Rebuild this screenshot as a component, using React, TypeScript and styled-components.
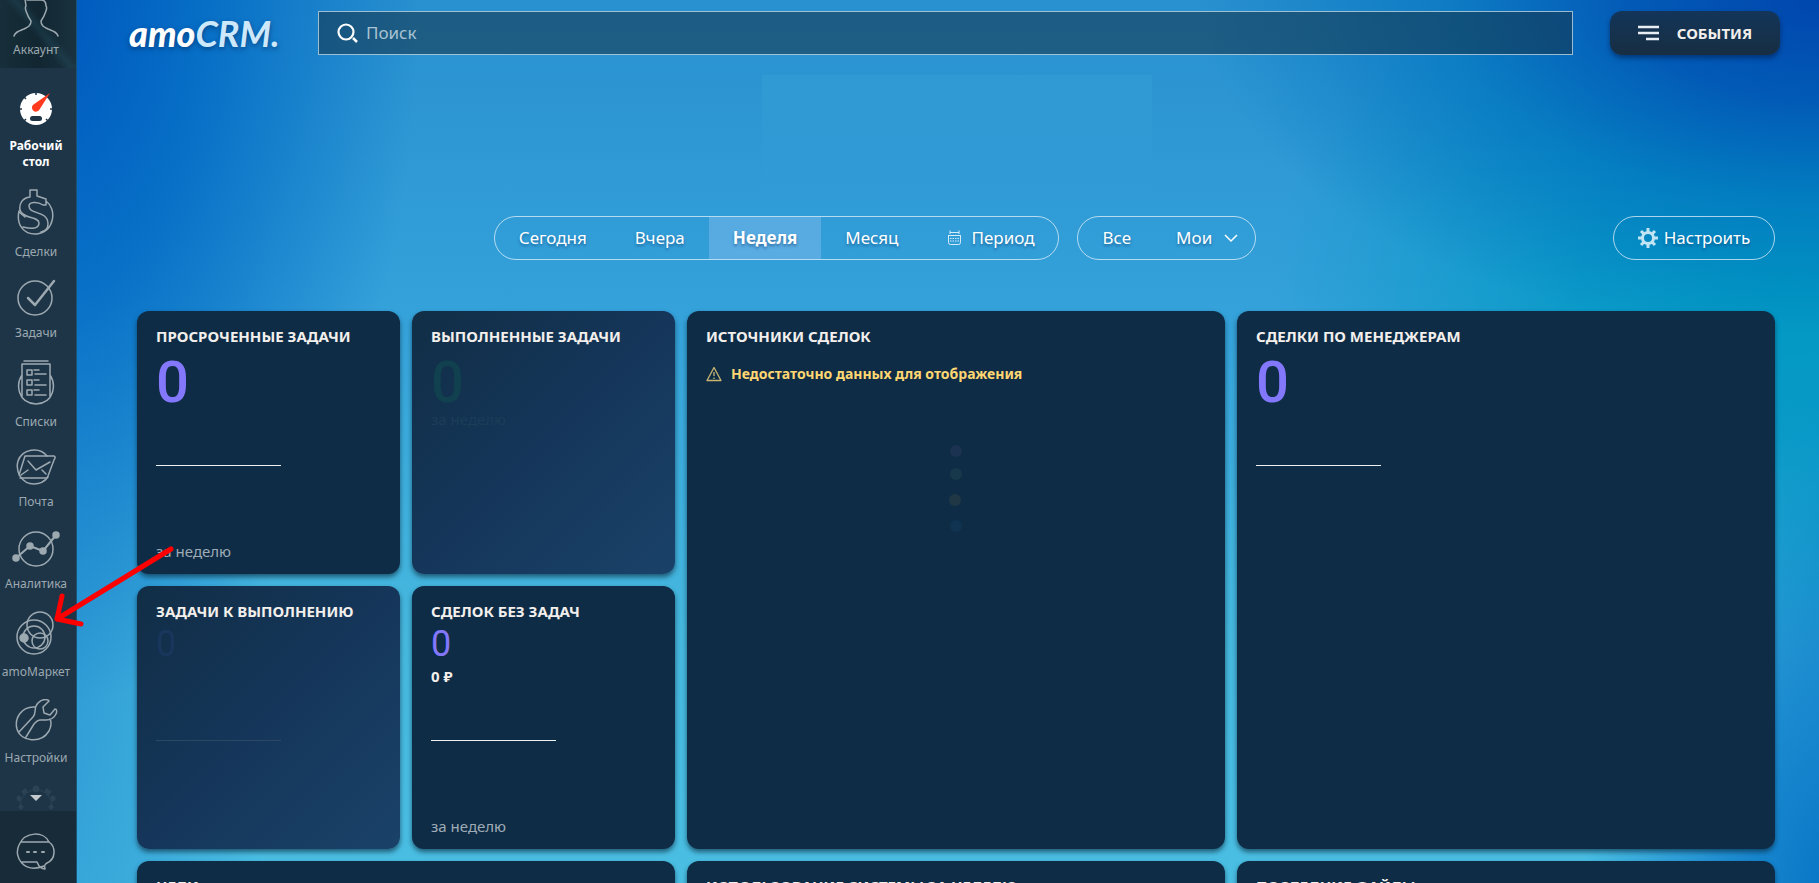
import React from "react";
import styled, { createGlobalStyle, css } from "styled-components";

const GlobalStyle = createGlobalStyle`
  * { box-sizing: border-box; }
  body {
    margin: 0;
    font-family: "Noto Sans", "Open Sans", sans-serif;
    color: #f2efec;
    background: #2f9ad6;
  }
  button, input { font-family: inherit; color: inherit; }
  h2, p { margin: 0; }
`;

const Shell = styled.div`
  position: relative;
  display: flex;
  height: 100vh;
  overflow: hidden;
  background:
    radial-gradient(ellipse 34% 38% at 100% 0%, #0046ad 0%, rgba(0, 84, 180, 0.9) 30%, rgba(0, 112, 190, 0.65) 60%, rgba(0, 130, 200, 0) 100%),
    radial-gradient(ellipse 20% 80% at 3% 0%, #0058be 0%, rgba(0, 104, 196, 0.85) 40%, rgba(20, 130, 205, 0) 100%),
    radial-gradient(ellipse 28% 42% at 98% 32%, #0099c2 0%, rgba(0, 152, 196, 0.8) 40%, rgba(20, 152, 205, 0) 100%),
    radial-gradient(ellipse 14% 50% at 101% 102%, #0773c5 0%, rgba(20, 130, 205, 0.8) 45%, rgba(40, 150, 210, 0) 100%),
    radial-gradient(ellipse 8% 60% at 101% 65%, rgba(32, 150, 208, 0.9) 0%, rgba(40, 150, 210, 0) 100%),
    radial-gradient(ellipse 12% 90% at 3% 75%, rgba(44, 152, 212, 0.9) 0%, rgba(40, 150, 210, 0) 100%),
    linear-gradient(180deg, #2890cf 0%, #34a1da 34%, #46b8de 72%, #4abfe3 100%);
`;

/* ---------- Sidebar ---------- */

const Sidebar = styled.nav`
  flex: 0 0 77px;
  display: flex;
  flex-direction: column;
  background: #1e3548;
  border-right: 1px solid #1b5374;
  line-height: 16px;
  overflow: hidden;
`;

const NavLink = styled.a<{ $active?: boolean }>`
  display: flex;
  flex-direction: column;
  align-items: center;
  gap: 9px;
  width: 72px;
  text-align: center;
  text-decoration: none;
  white-space: nowrap;
  color: ${(p) => (p.$active ? "#ffffff" : "#9da9b0")};
  font-weight: ${(p) => (p.$active ? 700 : 400)};
  font-size: 12px;
  svg { display: block; }
`;

const AccountBlock = styled.div`
  flex: 0 0 68px;
  background:
    linear-gradient(50deg, rgba(0, 0, 0, 0) 46%, rgba(40, 84, 104, 0.3) 54%, rgba(0, 0, 0, 0) 62%),
    linear-gradient(90deg, #172f3a, #112631 50%, #1a323f);
  ${NavLink} { gap: 5px; }
`;

const NavList = styled.div`
  flex: 1;
  min-height: 0;
  overflow: hidden;
  display: flex;
  flex-direction: column;
  gap: 19px;
  padding-top: 24px;
`;

const MoreHint = styled.div`
  width: 72px;
  display: flex;
  justify-content: center;
`;

const ChatBlock = styled.div`
  flex: 0 0 72px;
  padding-top: 22px;
  background: #182b38;
`;

const Line = styled.svg`
  fill: none;
  stroke: #9da9b0;
  stroke-width: 1.5;
  stroke-linejoin: round;
  stroke-linecap: round;
`;

/* ---------- Main area ---------- */

const Main = styled.main`
  flex: 1;
  min-width: 0;
  display: flex;
  flex-direction: column;
  > * { flex-shrink: 0; }
`;

const Header = styled.header`
  display: flex;
  align-items: center;
  gap: 37px;
  padding: 11px 39px 0 52px;
  height: 55px;
`;

const Logo = styled.a`
  flex: 0 0 152px;
  display: flex;
  align-items: baseline;
  font-family: Lato, "Noto Sans", sans-serif;
  font-style: italic;
  font-weight: 900;
  font-size: 36px;
  line-height: 40px;
  color: #ffffff;
  text-decoration: none;
  text-shadow: 0 2px 5px rgba(0, 40, 90, 0.6);
  white-space: nowrap;
`;

const LogoAccent = styled.span`
  color: #cde8fb;
  font-weight: 700;
`;

const Search = styled.label`
  flex: 1;
  min-width: 0;
  height: 44px;
  display: flex;
  align-items: center;
  gap: 8px;
  padding: 0 18px;
  border: 1px solid rgba(205, 225, 235, 0.75);
  background: rgba(20, 50, 70, 0.55);
`;

const SearchInput = styled.input`
  flex: 1;
  min-width: 0;
  border: 0;
  outline: 0;
  padding: 0;
  background: transparent;
  font-size: 17px;
  line-height: 24px;
  &::placeholder { color: #a9c3d2; opacity: 1; }
`;

const EventsButton = styled.button`
  flex: 0 0 170px;
  height: 44px;
  display: flex;
  align-items: center;
  justify-content: center;
  gap: 18px;
  border: 0;
  border-radius: 12px;
  background: linear-gradient(180deg, #133559, #172e42);
  box-shadow: 0 3px 5px rgba(0, 20, 60, 0.5);
  font-size: 15px;
  font-weight: 700;
`;

const Placeholder = styled.div`
  align-self: center;
  width: 390px;
  height: 120px;
  margin: 20px 0 21px 18px;
  background: linear-gradient(180deg, rgba(52, 160, 212, 0.5), rgba(52, 160, 212, 0));
`;

const Toolbar = styled.div`
  display: flex;
  align-items: center;
  padding: 0 44px 0 60px;
`;

const Filters = styled.div`
  flex: 1;
  display: flex;
  justify-content: center;
  gap: 18px;
`;

const pill = css`
  height: 44px;
  border: 1px solid rgba(225, 240, 250, 0.75);
  border-radius: 22px;
  color: #ffffff;
  text-shadow: 0 2px 3px rgba(0, 40, 90, 0.45);
`;

const Segments = styled.div`
  ${pill}
  display: flex;
  overflow: hidden;
`;

const Segment = styled.button<{ $active?: boolean; $icon?: boolean }>`
  display: flex;
  align-items: center;
  gap: ${(p) => (p.$icon ? 10 : 0)}px;
  padding: 0 24px;
  border: 0;
  background: ${(p) => (p.$active ? "rgba(125, 185, 235, 0.5)" : "transparent")};
  font-size: 17px;
  line-height: 24px;
  font-weight: ${(p) => (p.$active ? 700 : 400)};
  text-shadow: inherit;
  white-space: nowrap;
`;

const OwnerSegment = styled(Segment)`
  gap: 12px;
  padding: 0 17px 0 21px;
`;

const SetupButton = styled.button`
  ${pill}
  flex: 0 0 162px;
  display: flex;
  align-items: center;
  justify-content: center;
  gap: 6px;
  padding: 0;
  background: transparent;
  font-size: 17px;
  line-height: 24px;
`;

/* ---------- Cards ---------- */

const Board = styled.section`
  display: grid;
  grid-template-columns: repeat(6, minmax(0, 1fr));
  grid-auto-rows: 263px;
  gap: 12px;
  padding: 51px 44px 0 60px;
`;

const Card = styled.article<{ $cols?: number; $rows?: number; $loading?: boolean }>`
  grid-column: span ${(p) => p.$cols ?? 1};
  grid-row: span ${(p) => p.$rows ?? 1};
  display: flex;
  flex-direction: column;
  padding: 14px 19px 12px;
  border-radius: 12px;
  background: ${(p) =>
    p.$loading ? "linear-gradient(135deg, #112e46 0%, #15365a 50%, #1a4269 100%)" : "#0e2c46"};
  box-shadow: 0 3px 5px rgba(10, 40, 60, 0.65);
`;

const CardTitle = styled.h2`
  font-size: 15px;
  line-height: 22px;
  font-weight: 700;
  text-transform: uppercase;
  white-space: nowrap;
`;

const Figure = styled.p<{ $small?: boolean; $tone?: string }>`
  font-family: Roboto, "Noto Sans", sans-serif;
  font-weight: ${(p) => (p.$small ? 400 : 500)};
  font-size: ${(p) => (p.$small ? 36 : 58)}px;
  line-height: ${(p) => (p.$small ? 42 : 52)}px;
  margin-top: ${(p) => (p.$small ? 1 : 9)}px;
  color: ${(p) => p.$tone ?? "#8377fb"};
`;

const Amount = styled.p`
  font-size: 15px;
  line-height: 22px;
  font-weight: 700;
`;

const Rule = styled.hr<{ $space: number; $faint?: boolean }>`
  width: 125px;
  height: 1px;
  margin: ${(p) => p.$space}px 0 0;
  border: 0;
  background: ${(p) => (p.$faint ? "#2b4964" : "#eef1f3")};
`;

const Period = styled.p<{ $faint?: boolean }>`
  font-size: 15px;
  line-height: 22px;
  color: ${(p) => (p.$faint ? "#1c3d58" : "#9fabb5")};
`;

const Spacer = styled.div`
  flex: 1;
`;

const Warning = styled.p`
  display: flex;
  align-items: center;
  gap: 9px;
  margin-top: 16px;
  font-size: 14px;
  line-height: 22px;
  font-weight: 700;
  color: #ffd772;
`;

const DotChart = styled.svg`
  align-self: center;
  margin-top: 59px;
`;

const Arrow = styled.svg`
  position: absolute;
  left: 50px;
  top: 540px;
  pointer-events: none;
`;

/* ---------- Icons ---------- */

const AccountIcon = () => (
  <Line width="50" height="37" viewBox="0 0 50 37" aria-hidden>
    <path d="M3 36c1-4 5-5 10-7 4-2 7-3 7-8-3-4-4-7-5-10-1-3-1-4 0-5l-1-7M47 36c-1-4-5-5-10-7-4-2-7-3-7-8 3-4 4-7 5-10 1-3 1-4 0-5 0-4-1-6-5-6h-14" />
  </Line>
);

const DashboardIcon = () => (
  <svg width="36" height="37" viewBox="0 0 36 37" aria-hidden>
    <circle cx="18" cy="17" r="16" fill="#fff" />
    <g stroke="#1e3548" strokeWidth="1.5">
      <path d="M18 0v3M6 5l2 2M1 17h3M32 17h3M6 29l2-2M30 29l-2-2" />
    </g>
    <rect x="12" y="24" width="12" height="5" rx="2.5" fill="#1e3548" />
    <path d="M32 1 21.500 17.500a4 4 0 1 1-6-5Z" fill="#ff3a1f" />
  </svg>
);

const DealsIcon = () => (
  <Line width="38" height="46" viewBox="0 0 38 46" aria-hidden>
    <path d="M13 8V1h7v6l9 3v6h-3C20 12 12 13 12 17c0 9 19 4 19 18 0 4-3 7-7 8M13 8C5 9 2 15 3 21c2 9 19 6 19 13 0 6-7 6-16 4M29 12c11 8 9 30-9 33C7 46-1 36 2 22" />
    <path d="M2 23l6 5" />
  </Line>
);

const TasksIcon = () => (
  <Line width="40" height="37" viewBox="0 0 40 37" aria-hidden>
    <circle cx="19" cy="19" r="17" />
    <path d="M12 19l7 7L38 2" strokeWidth="2.500" />
  </Line>
);

const ListsIcon = () => (
  <Line width="38" height="45" viewBox="0 0 38 45" aria-hidden>
    <path d="M7 1h24M5 37V4h28v33M5 15C-1 24 0 43 19 44c19-1 20-20 14-29" />
    <path d="M10 10h5v5h-5zM10 20h5v5h-5zM10 30h5v5h-5zM17 10h5M18 14h11M17 20h5M18 25h11M17 30h5M18 35h11" />
  </Line>
);

const MailIcon = () => (
  <Line width="40" height="36" viewBox="0 0 40 36" aria-hidden>
    <path d="M31 7C23-3 6 0 2 12c-3 11 4 23 16 23 7 0 11-3 14-7" />
    <path d="M9 7h29c2 1 1 2 0 4l-6 16c-1 2-1 2-3 2H4M9 7L3 26M12 12l8 9 14-8M5 26l7-5M26 21l4 4" />
  </Line>
);

const AnalyticsIcon = () => (
  <Line width="48" height="38" viewBox="0 0 48 38" aria-hidden>
    <circle cx="24" cy="20" r="17" />
    <path d="M4 29l14-12 13 5L44 6" strokeWidth="2" />
    <g fill="#9da9b0">
      <circle cx="4" cy="29" r="3" />
      <circle cx="18" cy="17" r="3" />
      <circle cx="31" cy="22" r="3" />
      <circle cx="44" cy="6" r="3" />
    </g>
  </Line>
);

const MarketIcon = () => (
  <Line width="40" height="44" viewBox="0 0 40 44" aria-hidden>
    <circle cx="24" cy="14" r="13" />
    <circle cx="18" cy="26" r="17" />
    <circle cx="18" cy="26" r="11" />
    <circle cx="24" cy="30" r="8" />
    <circle cx="8" cy="27" r="4" fill="#9da9b0" />
  </Line>
);

const SettingsIcon = () => (
  <Line width="44" height="42" viewBox="0 0 44 42" aria-hidden>
    <path d="M21 8C8 7 0 19 3 30c4 13 24 15 32 2 2-4 3-8 1-12M5 33l14-15c4-4 0-9 5-14 3-3 7-4 10-3l1 1-6 6 1 6 6 2 5-6c2 0 2 3 1 5-2 4-6 6-10 6h-6c-3 0-4 2-6 4L12 38" />
  </Line>
);

const MoreIcon = () => (
  <svg width="42" height="26" viewBox="0 0 42 26" aria-hidden>
    <g fill="#2b4354" stroke="#2b4354">
      <path d="M5 24C4 12 12 5 21 5s17 7 16 19" fill="none" />
      <path d="M21 5V2M10 10L7 6M32 10l4-4M5 16l-3-2M37 16l3-2" strokeWidth="2" />
      <circle cx="21" cy="4" r="3" /><circle cx="10" cy="6" r="2" /><circle cx="32" cy="6" r="2" />
      <circle cx="4" cy="13" r="2" /><circle cx="38" cy="13" r="2" />
      <circle cx="6" cy="22" r="2" /><circle cx="36" cy="22" r="2" />
    </g>
    <path d="M15 10h12l-6 6z" fill="#c3c9cd" />
  </svg>
);

const ChatIcon = () => (
  <Line width="40" height="38" viewBox="0 0 40 38" aria-hidden>
    <path d="M28 33C8 41-3 24 3 12 9-2 28-2 33 9c7 5 7 17-2 21-2 1-3 2-2 6-4 0-6-2-8-7H6M5 9h28" />
    <path d="M11 19h2M18 19h2M26 19h2" strokeWidth="2" />
  </Line>
);

const SearchIcon = () => (
  <svg width="21" height="20" viewBox="0 0 21 20" fill="none" stroke="#fff" aria-hidden>
    <circle cx="9" cy="9" r="7.500" strokeWidth="2.200" />
    <path d="M16 15l4 4" strokeWidth="2.500" />
  </svg>
);

const EventsIcon = () => (
  <svg width="21" height="16" viewBox="0 0 21 16" stroke="#e8eef3" strokeWidth="2.500" aria-hidden>
    <path d="M0 2h21M0 8h21M8 14h13" />
  </svg>
);

const CalendarIcon = () => (
  <svg width="15" height="16" viewBox="0 0 15 16" fill="none" stroke="#d5ebf8" aria-hidden>
    <path d="M3 2.500h9M1 5.500h13M1.500 5.500v7q0 2 2 2h8q2 0 2-2v-7M3 .500v3.500M12 .500v3.500" />
    <path d="M3 8.500h9M3 11h9" strokeDasharray="1.500 1" />
  </svg>
);

const ChevronIcon = () => (
  <svg width="14" height="9" viewBox="0 0 14 9" fill="none" stroke="#fff" strokeWidth="1.500" aria-hidden>
    <path d="M1 1l6 6 6-6" />
  </svg>
);

const GearIcon = () => (
  <svg width="20" height="20" viewBox="0 0 20 20" fill="none" stroke="#c3e4f3" aria-hidden>
    <circle cx="10" cy="10" r="5.500" strokeWidth="3" />
    <path d="M10 0v4M10 16v4M0 10h4M16 10h4M3 3l3 3M14 14l3 3M17 3l-3 3M6 14l-3 3" strokeWidth="3" />
  </svg>
);

const WarningIcon = () => (
  <svg width="16" height="16" viewBox="0 0 16 16" fill="none" stroke="#c9b571" strokeWidth="1.300" aria-hidden>
    <path d="M8 1.500L15 14.500H1z" strokeLinejoin="round" />
    <path d="M8 6v4M8 11.500v1.500" />
  </svg>
);

const items = [
  { label: "Сделки", Icon: DealsIcon },
  { label: "Задачи", Icon: TasksIcon },
  { label: "Списки", Icon: ListsIcon },
  { label: "Почта", Icon: MailIcon },
  { label: "Аналитика", Icon: AnalyticsIcon },
  { label: "amoМаркет", Icon: MarketIcon },
  { label: "Настройки", Icon: SettingsIcon },
];

export default function App() {
  return (
    <>
      <GlobalStyle />
      <Shell>
        <Sidebar>
          <AccountBlock>
            <NavLink href="#account"><AccountIcon />Аккаунт</NavLink>
          </AccountBlock>
          <NavList>
            <NavLink href="#dashboard" $active>
              <DashboardIcon />
              <span>Рабочий<br />стол</span>
            </NavLink>
            {items.map(({ label, Icon }) => (
              <NavLink key={label} href={`#${label}`}><Icon />{label}</NavLink>
            ))}
            <MoreHint><MoreIcon /></MoreHint>
          </NavList>
          <ChatBlock>
            <NavLink href="#chat" aria-label="Чат"><ChatIcon /></NavLink>
          </ChatBlock>
        </Sidebar>

        <Main>
          <Header>
            <Logo href="#home">amo<LogoAccent>CRM.</LogoAccent></Logo>
            <Search>
              <SearchIcon />
              <SearchInput type="text" placeholder="Поиск" aria-label="Поиск" />
            </Search>
            <EventsButton><EventsIcon />СОБЫТИЯ</EventsButton>
          </Header>

          <Placeholder />

          <Toolbar>
            <Filters>
              <Segments>
                <Segment>Сегодня</Segment>
                <Segment>Вчера</Segment>
                <Segment $active>Неделя</Segment>
                <Segment>Месяц</Segment>
                <Segment $icon><CalendarIcon />Период</Segment>
              </Segments>
              <Segments>
                <Segment>Все</Segment>
                <OwnerSegment>Мои<ChevronIcon /></OwnerSegment>
              </Segments>
            </Filters>
            <SetupButton><GearIcon />Настроить</SetupButton>
          </Toolbar>

          <Board>
            <Card>
              <CardTitle>Просроченные задачи</CardTitle>
              <Figure>0</Figure>
              <Rule $space={57} />
              <Spacer />
              <Period>за неделю</Period>
            </Card>
            <Card $loading>
              <CardTitle>Выполненные задачи</CardTitle>
              <Figure $tone="#11404f">0</Figure>
              <Period $faint>за неделю</Period>
            </Card>
            <Card $cols={2} $rows={2}>
              <CardTitle>Источники сделок</CardTitle>
              <Warning><WarningIcon />Недостаточно данных для отображения</Warning>
              <DotChart width="14" height="90" viewBox="0 0 14 90" aria-hidden>
                <circle cx="7" cy="7" r="6" fill="#1b3350" />
                <circle cx="7" cy="30" r="6" fill="#17384a" />
                <circle cx="6" cy="56" r="6" fill="#203846" />
                <circle cx="7" cy="82" r="6" fill="#103351" />
              </DotChart>
            </Card>
            <Card $cols={2} $rows={2}>
              <CardTitle>Сделки по менеджерам</CardTitle>
              <Figure>0</Figure>
              <Rule $space={57} />
            </Card>
            <Card $loading>
              <CardTitle>Задачи к выполнению</CardTitle>
              <Figure $small $tone="#19365c">0</Figure>
              <Rule $space={75} $faint />
            </Card>
            <Card>
              <CardTitle>Сделок без задач</CardTitle>
              <Figure $small>0</Figure>
              <Amount>0 ₽</Amount>
              <Rule $space={53} />
              <Spacer />
              <Period>за неделю</Period>
            </Card>
            <Card $cols={2}><CardTitle>Цели</CardTitle></Card>
            <Card $cols={2}><CardTitle>Использование системы за неделю</CardTitle></Card>
            <Card $cols={2}><CardTitle>Последние файлы</CardTitle></Card>
          </Board>
        </Main>

        <Arrow width="130" height="92" viewBox="0 0 130 92" fill="none" stroke="#ff0000" strokeWidth="5" aria-hidden>
          <path d="M121 9L7 79M12 56L7 79l24 5" strokeLinejoin="round" strokeLinecap="round" />
        </Arrow>
      </Shell>
    </>
  );
}
